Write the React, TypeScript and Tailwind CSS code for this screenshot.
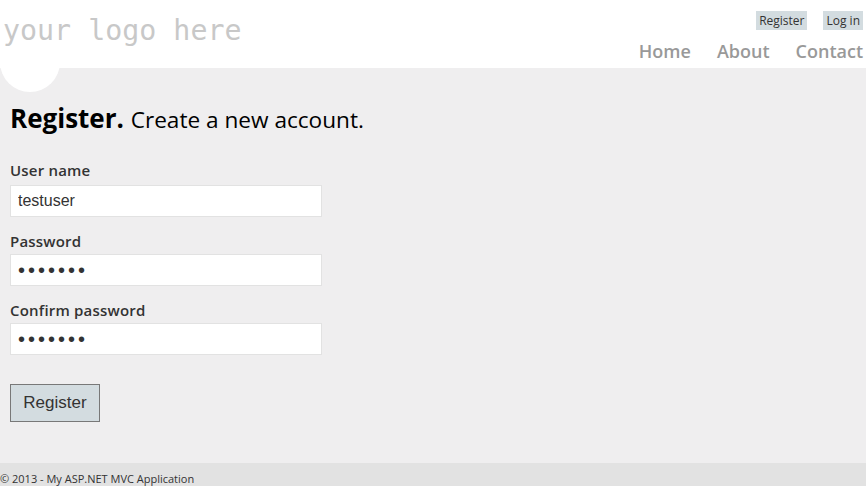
import {useState} from "react";

export default function App() {
    const [userName, setUserName] = useState<string>("testuser");
    const [password, setPassword] = useState<string>("1234567");
    const [confirm, setConfirm] = useState<string>("1234567");

    return (
        <div className="min-h-[486px] h-[486px] overflow-hidden bg-[#efeeef] flex flex-col font-['Open_Sans',sans-serif] text-[#333]">
            <header className="relative h-[68px] shrink-0 bg-white flex justify-between">
                <div className="absolute left-0 top-[32px] w-[60px] h-[60px] rounded-full bg-white"></div>
                <p className="relative pl-[3px] pt-[14px] font-['DejaVu_Sans_Mono',monospace] text-[28.3px] leading-[34px] text-[#c8c8c8]">
                    your logo here
                </p>
                <div className="flex flex-col items-end pr-[3px]">
                    <ul className="flex gap-[16px] mt-[11px] text-[12px] leading-[19px]">
                        <li className="bg-[#d3dce0] px-[3px]">Register</li>
                        <li className="bg-[#d3dce0] px-[3px]">Log in</li>
                    </ul>
                    <nav className="flex gap-[26px] mt-[9px] text-[18px] leading-[24px] font-semibold text-[#999]">
                        <span>Home</span>
                        <span>About</span>
                        <span>Contact</span>
                    </nav>
                </div>
            </header>

            <main className="flex-1 px-[10px] pt-[33px]">
                <h1 className="text-[26px] leading-[34px] text-[#000]">
                    <span className="font-bold">Register.</span>{" "}
                    <span className="text-[22.6px]">Create a new account.</span>
                </h1>

                <form className="mt-[23px] flex flex-col">
                    <label className="text-[15px] leading-[20px] font-semibold tracking-[0.2px]">User name</label>
                    <input
                        className="mt-[5px] w-[312px] h-[32px] bg-white border border-[#e2e2e2] px-[7px] font-['Liberation_Sans',sans-serif] text-[16px] text-[#333] outline-none"
                        value={userName}
                        onChange={(e) => setUserName(e.target.value)}
                    />
                    <label className="mt-[14px] text-[15px] leading-[20px] font-semibold tracking-[0.2px]">Password</label>
                    <input
                        type="password"
                        className="mt-[3px] w-[312px] h-[32px] bg-white border border-[#e2e2e2] px-[7px] font-['Liberation_Sans',sans-serif] text-[20px] tracking-[3px] text-[#333] outline-none"
                        value={password}
                        onChange={(e) => setPassword(e.target.value)}
                    />
                    <label className="mt-[14px] text-[15px] leading-[20px] font-semibold tracking-[0.2px]">Confirm password</label>
                    <input
                        type="password"
                        className="mt-[3px] w-[312px] h-[32px] bg-white border border-[#e2e2e2] px-[7px] font-['Liberation_Sans',sans-serif] text-[20px] tracking-[3px] text-[#333] outline-none"
                        value={confirm}
                        onChange={(e) => setConfirm(e.target.value)}
                    />
                    <div className="mt-[29px]">
                        <button
                            type="button"
                            className="w-[90px] h-[38px] bg-[#d3dce0] border border-[#787878] font-['Liberation_Sans',sans-serif] text-[17px] text-[#333]"
                        >
                            Register
                        </button>
                    </div>
                </form>
            </main>

            <footer className="h-[23px] shrink-0 bg-[#e2e2e2] pt-[8px]">
                <p className="text-[11px] leading-[15px]">© 2013 - My ASP.NET MVC Application</p>
            </footer>
        </div>
    );
}
